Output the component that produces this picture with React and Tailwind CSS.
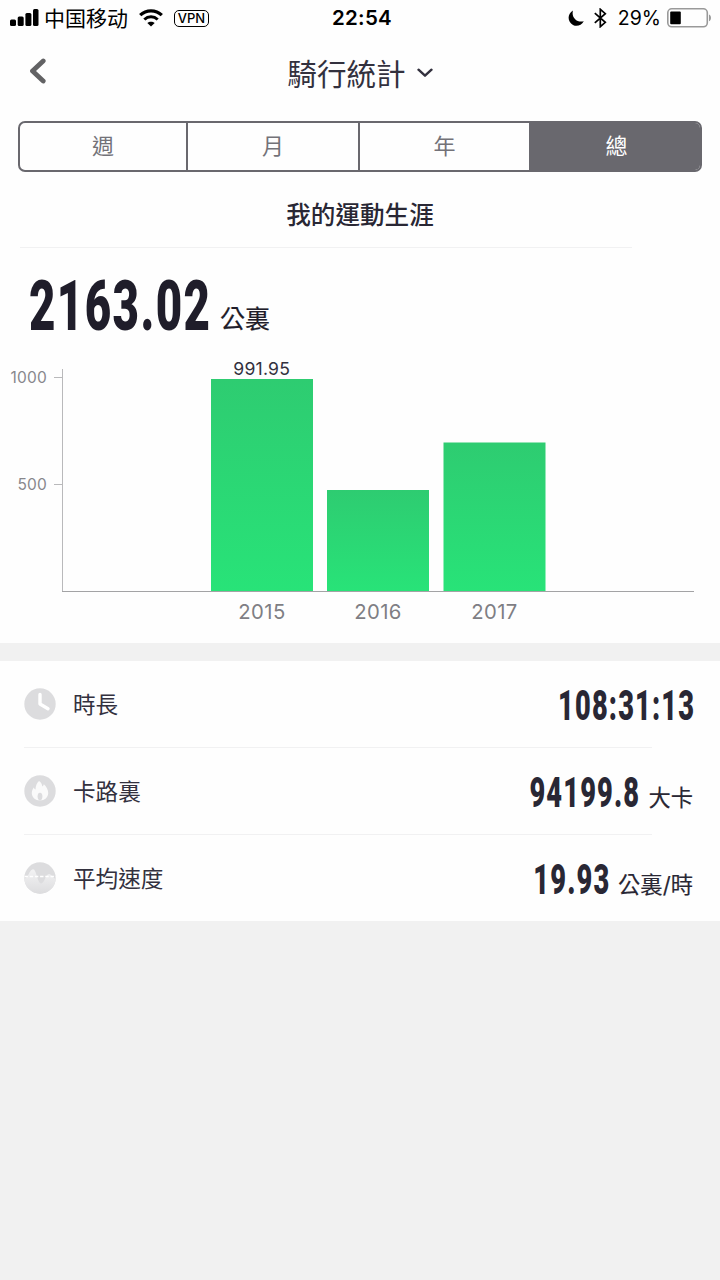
const tabs = [
  { id: "week", label: "週", width: "w-[168px]" },
  { id: "month", label: "月", width: "w-[172px]" },
  { id: "year", label: "年", width: "w-[171px]" },
  { id: "total", label: "總", width: "w-[169px]" },
];

const bars = [
  { year: "2015", value: 991.95, x: 211, y: 379 },
  { year: "2016", value: 476, x: 327, y: 490 },
  { year: "2017", value: 695, x: 443.5, y: 442.5 },
];

function StatusBar() {
  return (
    <div className="flex h-9 items-center justify-between pl-[10px] pr-[9px] text-black">
      <div className="flex w-[240px] items-center">
        <svg width="29" height="18" viewBox="0 0 29 18">
          <rect x="0" y="10.5" width="6" height="6.5" rx="1.5" />
          <rect x="7.7" y="7.5" width="6" height="9.5" rx="1.5" />
          <rect x="15.4" y="4" width="6" height="13" rx="1.5" />
          <rect x="23" y="0" width="5.5" height="17" rx="1.5" />
        </svg>
        <span className="ml-[5px] whitespace-nowrap pt-px text-[21px] leading-9">中国移动</span>
        <svg className="ml-[11px]" width="24" height="18" viewBox="0 0 24 18" fill="none" stroke="#000">
          <path d="M1.2 6.2C7.2 0.3 16.8 0.3 22.8 6.2" strokeWidth="3.2" />
          <path d="M5.3 10.5C9.2 6.9 14.8 6.9 18.7 10.5" strokeWidth="3" />
          <path d="M12 17.6L8.3 14.1C10.4 12.2 13.6 12.2 15.7 14.1Z" fill="#000" stroke="none" />
        </svg>
        <span className="ml-[11px] flex h-[17px] w-[35px] items-center justify-center rounded-[5px] border-[1.5px] border-black pt-px text-[13px] font-medium leading-none">
          VPN
        </span>
      </div>
      <span className="pl-[3px] text-[20.5px] font-semibold leading-9 tracking-[0.3px]">22:54</span>
      <div className="flex w-[240px] items-center justify-end">
        <svg width="17" height="17" viewBox="0 0 17 17">
          <path d="M5 0.5C3.2 6.8 8 12.8 15.8 11.2C13.4 15.5 8.8 17 5 15C-0.7 12 -1 4 5 0.5Z" />
        </svg>
        <svg className="ml-[9px]" width="13" height="20" viewBox="0 0 13 20" fill="none" stroke="#000" strokeWidth="1.7">
          <path d="M0.8 5.2L11.3 14.3L6.3 18.7V1.3L11.3 5.7L0.8 14.8" />
        </svg>
        <span className="ml-[11px] text-[19.5px] leading-9">29%</span>
        <svg className="ml-[6px]" width="44" height="20" viewBox="0 0 44 20">
          <rect x="0.8" y="0.8" width="39.5" height="18" rx="4" fill="none" stroke="#999" strokeWidth="1.6" />
          <rect x="3.2" y="3.4" width="10.6" height="12.8" rx="1" />
          <path d="M42 6.5C44.6 7.5 44.6 12.3 42 13.3Z" fill="#999" />
        </svg>
      </div>
    </div>
  );
}

function NavBar() {
  return (
    <div className="grid h-[85px] grid-cols-[60px_1fr_60px] items-center pb-[11px]">
      <svg className="mb-[4px] ml-[28px]" width="18" height="26" viewBox="0 0 18 26" fill="none" stroke="#626264" strokeWidth="4.8" strokeLinecap="round" strokeLinejoin="round">
        <path d="M15.2 3L4.5 13L15.2 23" />
      </svg>
      <div className="flex items-center justify-center text-[#33313e]">
        <h1 className="pt-px text-[29.6px] leading-10">騎行統計</h1>
        <svg className="ml-[11px]" width="16" height="10" viewBox="0 0 16 10" fill="none" stroke="currentColor" strokeWidth="2.4" strokeLinecap="round" strokeLinejoin="round">
          <path d="M1.5 1.7L8 7.7L14.5 1.7" />
        </svg>
      </div>
    </div>
  );
}

function Tabs({ active }) {
  return (
    <div className="mx-[18px] flex h-[51px] overflow-hidden rounded-[7px] border-2 border-[#69686e]">
      {tabs.map((tab) => (
        <button
          key={tab.id}
          className={`${tab.width} flex shrink-0 items-center justify-center text-[22px] ${
            active === tab.id
              ? "bg-[#69686e] pl-[2px] text-white"
              : "border-r-2 border-[#69686e] text-[#737278]"
          }`}
        >
          {tab.label}
        </button>
      ))}
    </div>
  );
}

function Chart() {
  return (
    <svg className="block" width="720" height="299" viewBox="0 344 720 299">
      <defs>
        <linearGradient id="bar" x1="0" y1="0" x2="0" y2="1">
          <stop offset="0" stopColor="#2ecc71" />
          <stop offset="1" stopColor="#28e378" />
        </linearGradient>
      </defs>
      <path d="M62.5 369V591.5M54 377.5H62.5M54 484.5H62.5" stroke="#b9b9bb" fill="none" />
      <g fill="#88878c" fontSize="15.5" textAnchor="end" letterSpacing="0.2">
        <text x="47" y="383.3">1000</text>
        <text x="47" y="490.3">500</text>
      </g>
      {bars.map((bar) => (
        <g key={bar.year}>
          <rect x={bar.x} y={bar.y} width="102" height={591 - bar.y} fill="url(#bar)" />
          <text x={bar.x + 51} y="619" fill="#7f7e84" fontSize="20.3" textAnchor="middle" letterSpacing="0.4">
            {bar.year}
          </text>
        </g>
      ))}
      <text x="261.7" y="375" fill="#33313e" fontSize="17.6" textAnchor="middle" letterSpacing="0.2">
        991.95
      </text>
      <path d="M62 591.5H694" stroke="#a3a3a5" />
    </svg>
  );
}

function ClockIcon() {
  return (
    <svg width="32" height="32" viewBox="0 0 32 32">
      <circle cx="16" cy="16" r="15.7" fill="#dcdcde" />
      <path d="M16 6.5V16L24 20.7" fill="none" stroke="#fff" strokeWidth="3.4" strokeLinecap="round" strokeLinejoin="round" />
    </svg>
  );
}

function FlameIcon() {
  return (
    <svg width="32" height="32" viewBox="0 0 32 32">
      <circle cx="16" cy="16" r="15.7" fill="#dcdcde" />
      <path d="M15 6C17 7.2 18 9 18.3 11.5C19.2 11 19.7 10.2 19.8 9.2C22.3 11.6 24.2 14.3 24.2 18C24.2 22.5 20.6 25.5 16 25.5C11.4 25.5 7.8 22.5 7.8 18C7.8 15.8 8.7 14.1 9.8 12.5C10.2 13.6 10.7 14.2 11.5 14.6C11.7 11 12.6 8.1 15 6Z" fill="#fafafa" />
      <path d="M16 17.7C17.7 17.7 18.4 19.3 18.4 21.2C18.4 23.7 17.5 25.5 16 25.5C14.5 25.5 13.6 23.7 13.6 21.2C13.6 19.3 14.3 17.7 16 17.7Z" fill="#dcdcde" />
    </svg>
  );
}

function SpeedIcon() {
  return (
    <svg width="32" height="32" viewBox="0 0 32 32">
      <defs>
        <linearGradient id="wave" x1="0" y1="0" x2="0" y2="1">
          <stop offset="0" stopColor="#f3f3f4" />
          <stop offset="1" stopColor="#dcdcde" />
        </linearGradient>
        <clipPath id="disc">
          <circle cx="16" cy="16" r="15.7" />
        </clipPath>
      </defs>
      <g clipPath="url(#disc)">
        <path d="M0 0H32V32H0Z" fill="#dcdcde" />
        <path d="M0 17C4.5 16 5.5 7.3 9 7.3C12.5 7.3 13.5 21.5 17.2 21.5C20.5 21.5 21.5 12 25 12C27.5 12 28.5 16 32 17V32H0Z" fill="url(#wave)" />
        <path d="M0.5 14.5H32" stroke="#fff" strokeWidth="1.6" strokeDasharray="3.4 1.8" />
      </g>
    </svg>
  );
}

const rows = [
  { label: "時長", value: "108:31:13", unit: "", box: "w-[138px]", Icon: ClockIcon },
  { label: "卡路裏", value: "94199.8", unit: "大卡", box: "w-[111px]", Icon: FlameIcon },
  { label: "平均速度", value: "19.93", unit: "公裏/時", box: "w-[76px]", Icon: SpeedIcon },
];

function StatRow({ row, last }) {
  const { label, value, unit, box, Icon } = row;
  return (
    <div>
      <div className="flex h-[86px] items-center pl-6 pr-[27px]">
        <Icon />
        <span className="ml-[17px] flex-1 pt-[2px] text-[22.6px] text-[#33313e]">{label}</span>
        <div className="flex h-11 items-start text-[#292734]">
          <span className={`${box} flex justify-end pt-[2px]`}>
            <span className="-mr-[2px] origin-right scale-x-[0.64] font-['Roboto'] text-[42.5px] font-black leading-11 tracking-[1.8px]">
              {value}
            </span>
          </span>
          {unit && (
            <span className="ml-[10px] whitespace-nowrap pt-[13px] text-[22.3px] leading-8 [-webkit-text-stroke:0.15px]">
              {unit}
            </span>
          )}
        </div>
      </div>
      {!last && <div className="ml-6 h-px w-[628px] bg-[#f1f1f2]" />}
    </div>
  );
}

export default function App() {
  return (
    <div className="min-h-screen w-[720px] bg-[#f1f1f1] font-['Inter','Noto_Sans_CJK_TC',sans-serif]">
      <div className="bg-[#fefefe]">
        <StatusBar />
        <NavBar />
        <Tabs active="total" />
        <h2 className="flex h-[75px] items-center justify-center pt-[11px] text-[24.6px] font-medium text-[#292734]">
          我的運動生涯
        </h2>
        <div className="ml-5 h-px w-[612px] bg-[#f1f1f2]" />
        <div className="flex h-[96px] items-start pl-[29px] pt-[20px] text-[#1f1d2a]">
          <span className="h-[76px] w-[181px]">
            <span className="inline-block origin-left scale-x-[0.643] font-['Roboto'] text-[71px] font-black leading-[76px] tracking-[2.2px]">
              2163.02
            </span>
          </span>
          <span className="ml-[10px] pt-[31px] text-[25px] leading-10 [-webkit-text-stroke:0.15px]">公裏</span>
        </div>
        <Chart />
      </div>
      <div className="mt-[18px] bg-[#fefefe]">
        {rows.map((row, i) => (
          <StatRow key={row.label} row={row} last={i === rows.length - 1} />
        ))}
      </div>
    </div>
  );
}
